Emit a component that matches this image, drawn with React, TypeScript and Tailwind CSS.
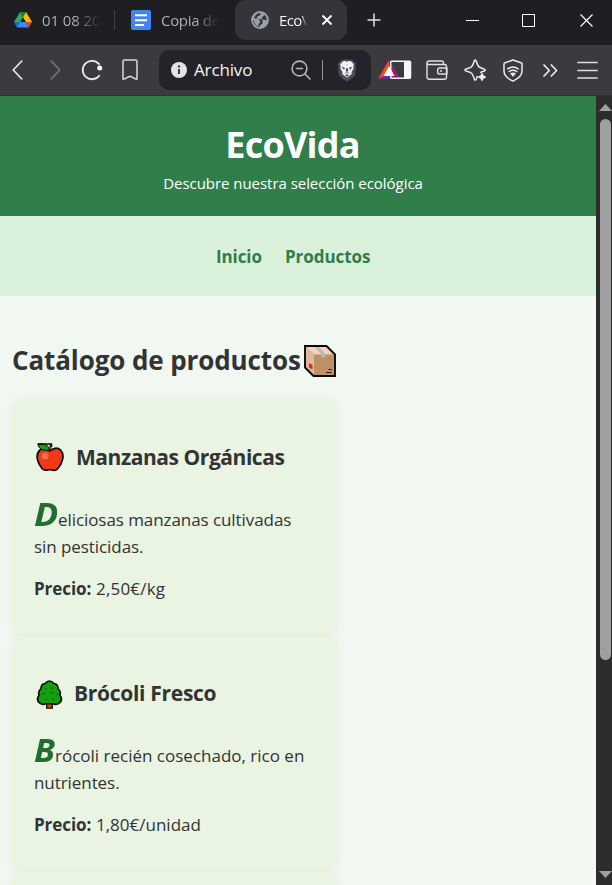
import type { ReactNode } from 'react';

function DriveIcon() {
  return (
    <svg className="h-[18px] w-[18px] shrink-0" viewBox="0 0 18 18">
      <path d="M6 1 9 6.300 3.200 16.500 0 11z" fill="#34a853" />
      <path d="M6 1h6L9 6.300z" fill="#188038" />
      <path d="M12 1 18 11h-6L9 6.300z" fill="#fbbc04" />
      <path d="M0 11h6l-3 5.500z" fill="#1967d2" />
      <path d="M6 11h6l2.800 5.500H3z" fill="#4285f4" />
      <path d="M12 11h6l-3.200 5.500z" fill="#ea4335" />
    </svg>
  );
}

function DocsIcon() {
  return (
    <svg className="h-5 w-5 shrink-0" viewBox="0 0 20 20">
      <rect width="20" height="20" rx="2" fill="#4285f4" />
      <path d="M4 5.300h12M4 10.200h12M4 15h9" stroke="#fff" strokeWidth="2" />
    </svg>
  );
}

function GlobeIcon() {
  return (
    <svg className="h-[18px] w-[18px] shrink-0" viewBox="0 0 18 18">
      <circle cx="9" cy="9" r="8.900" fill="#9aa0a6" />
      <path d="M9.500 2.100 9 4.500 6.500 5.200 6 8h4.500l1.200 2.500-.2 2L9.300 14l-.8 2C4.800 15.700 2.100 12.600 2.100 9l4 2.500.2-2L3 7.200C4 4 6.500 2.100 9.500 2.100z" fill="#35343a" />
      <path d="M12.300 3 15 5.500l.9 4-1.700-.7-1.800.3-1.700-1.500.5-1.800 2-.7z" fill="#35343a" />
      <path d="M3 7.500h3.500L9 9.500v2l-1.500 1.500v2.500C4.500 14.500 2.500 12 3 7.500z" fill="#9aa0a6" />
    </svg>
  );
}

function TabBar() {
  return (
    <div className="flex h-[45px] bg-[#1f1e23] text-[15px] leading-[40px] text-[#b5b5b9]">
      <div className="flex h-10 w-[114px] items-center pl-[14px]">
        <DriveIcon />
        <span className="ml-[10px] w-[59px] overflow-hidden whitespace-nowrap bg-linear-to-r from-[#b5b5b9] from-55% to-[#1f1e23] bg-clip-text tracking-[-0.1px] text-transparent">01 08 20</span>
      </div>
      <div className="mt-[10px] h-5 w-px bg-[#414045]" />
      <div className="flex h-10 w-[120px] items-center pl-[16px]">
        <DocsIcon />
        <span className="ml-[10px] w-[58px] overflow-hidden whitespace-nowrap bg-linear-to-r from-[#b5b5b9] from-60% to-[#1f1e23] bg-clip-text tracking-[-0.3px] text-transparent">Copia de</span>
      </div>
      <div className="flex h-10 w-[112px] items-center rounded-[11px] bg-[#35343a] pl-[16px]">
        <GlobeIcon />
        <span className="ml-[10px] w-[28px] overflow-hidden whitespace-nowrap bg-linear-to-r from-white from-80% to-[#35343a] bg-clip-text tracking-[-0.6px] text-transparent">EcoV</span>
        <svg className="ml-[14px] h-3 w-3" viewBox="0 0 12 12" stroke="#fff" strokeWidth="1.900"><path d="m1.500 1.500 9 9m0-9-9 9" /></svg>
      </div>
      <svg className="ml-[20px] mt-[13px] h-[14px] w-[14px]" viewBox="0 0 14 14" stroke="#e2e2e4" strokeWidth="1.500"><path d="M7 .5v13M.5 7h13" /></svg>
      <svg className="ml-[85px] mt-[14px] h-[13px] w-[13px]" viewBox="0 0 13 13" stroke="#fff"><path d="M0 6.500h13" /></svg>
      <svg className="ml-[43px] mt-[14px] h-[13px] w-[13px]" viewBox="0 0 13 13" fill="none" stroke="#fff"><path d="M.5.500h12v12H.5z" /></svg>
      <svg className="ml-[45px] mt-[14px] h-[13px] w-[13px]" viewBox="0 0 13 13" stroke="#fff" strokeWidth="1.200"><path d="m.5.500 12 12m0-12-12 12" /></svg>
    </div>
  );
}

function Toolbar() {
  return (
    <div className="flex h-[51px] items-center border-b border-[#333238] bg-[#3b3a3f] text-[#ececef]">
      <svg className="ml-3 h-5 w-[11px]" viewBox="0 0 11 20" fill="none" stroke="currentColor" strokeWidth="1.600" strokeLinecap="round" strokeLinejoin="round"><path d="M9.800 1 1.200 10l8.600 9" /></svg>
      <svg className="ml-[27px] h-5 w-[11px]" viewBox="0 0 11 20" fill="none" stroke="#77767c" strokeWidth="1.600" strokeLinecap="round" strokeLinejoin="round"><path d="m1.200 1 8.600 9-8.600 9" /></svg>
      <svg className="ml-[20px] h-[22px] w-[22px]" viewBox="0 0 22 22" fill="none" stroke="currentColor" strokeWidth="1.800" strokeLinecap="round">
        <path d="M18 5.100A9.200 9.200 0 1 0 18.200 16.700" />
        <circle cx="18.700" cy="8.900" r="2.500" fill="#fff" stroke="none" />
      </svg>
      <svg className="ml-[19px] h-[22px] w-4" viewBox="0 0 16 22" fill="none" stroke="#dadadd" strokeWidth="1.500" strokeLinejoin="round"><path d="M1 2.500Q1 1 2.500 1h11Q15 1 15 2.500v17.200q0 1-1 .5L8.700 17.500q-.7-.4-1.400 0L2 20.200q-1 .5-1-.5z" /></svg>
      <div className="ml-[21px] flex h-10 w-[212px] items-center rounded-[10px] bg-[#242329] pl-3">
        <svg className="h-4 w-4" viewBox="0 0 16 16"><circle cx="8" cy="8" r="8" fill="#e2e2e7" /><path d="M8 7v5" stroke="#3c3b42" strokeWidth="2" /><circle cx="8" cy="4.400" r="1.200" fill="#3c3b42" /></svg>
        <span className="ml-[7px] w-[97px] text-[17px] leading-10 tracking-[-0.15px] text-[#f4f4f6]">Archivo</span>
        <svg className="h-5 w-5" viewBox="0 0 20 20" fill="none" stroke="#b5b4b9" strokeWidth="1.600" strokeLinecap="round"><circle cx="8.500" cy="8.500" r="7.400" /><path d="m14 14 5 5M5.500 8.500h6" /></svg>
        <div className="ml-[11px] h-5 w-px bg-[#929297]" />
        <svg className="ml-[14px] h-[23px] w-[20px]" viewBox="0 0 20 23">
          <path d="M4.500 1Q10-.5 15.500 1L19 4.300l-.8 11.200Q17.500 18 10 22.700 2.500 18 1.800 15.500L1 4.300z" fill="#4c4b60" />
          <path d="M6 2.300 8 2l2 .8 2-.8 2 .3 2.800 3-.5 2.700.2 1.800-2 3.100.2 2-2.500 2-2.200 1.900-2.200-1.900-2.500-2 .2-2-2-3.100.2-1.800L3.200 5.300z" fill="#f4f4f8" />
          <path d="M4.500 7.500 8 8.700 7 11zM15.500 7.500 12 8.700l1 2.300zM9.300 9h1.400l.6 3-1.300 1-1.300-1zM7 14.300l3-1 3 1-1.300.3L10 14l-1.700.6zM8 16.300l2-1 2 1-2 1.400zM7.500 5.200h1.800L10 6l.7-.8h1.800" fill="#4c4b60" />
        </svg>
      </div>
      <svg className="ml-[7px] h-[22px] w-[34px]" viewBox="0 0 34 22">
        <path d="M0 20 11 1v8L6 17.500z" fill="#ff4724" />
        <path d="M11 1 22.500 20H18L11 9z" fill="#9e1f63" />
        <path d="M0 20h22.500L17 17H6z" fill="#662d91" />
        <path d="m11 7 5.500 10h-11z" fill="#fff" />
        <rect x="12.700" y="2.300" width="19.800" height="17" rx="1" fill="none" stroke="#f7f7f9" strokeWidth="1.500" />
        <path d="M26 2h7v17h-7z" fill="#f7f7f9" />
      </svg>
      <svg className="ml-[14px] h-5 w-[22px]" viewBox="0 0 22 20" fill="none" stroke="#e2e2e5" strokeWidth="1.400" strokeLinejoin="round"><path d="M2.500 4.500h16q2 0 2 2v10.700q0 2-2 2h-15q-2.500 0-2.500-2.200V3q0-2 2.200-2h12.300q2 0 2 2v1.500M1.200 3.500q.3 1 1.500 1H17M21 8h-7.500q-1.800 0-1.800 1.800v2.400q0 1.800 1.800 1.800H21z" /><path d="M14 11h2" /></svg>
      <svg className="ml-4 h-[23px] w-[23px]" viewBox="0 0 23 23" fill="none" stroke="#ededf0" strokeWidth="1.500" strokeLinejoin="round"><path d="M13.500 17q-.8 1.500-1.300 3.200-.9 2-1.900 0-1.700-5.300-3-6.200Q6.300 13 2 11.900q-2-1 0-1.900 4.500-1.200 5.600-2.300Q9 6.300 10.300 2q.9-2 1.900 0 1.400 4.500 2.500 5.600t5.500 2.500q2 .9 0 1.900-2.200.6-4 1.600" /><path d="m18 14.800 1 2.200 2.200 1-2.200 1-1 2.200-1-2.200-2.200-1 2.200-1z" fill="#fff" /></svg>
      <svg className="ml-[16px] h-[23px] w-5" viewBox="0 0 20 23" fill="none" stroke="#eeeef0" strokeWidth="1.500" strokeLinecap="round" strokeLinejoin="round"><path d="M10 1 18 3.700q1 .4 1 1.400v7q0 6-9 10-9-4-9-10v-7Q1 4 2 3.700z" /><path d="M4.800 9.800q5.200-3.700 10.400 0M6.200 12.500q3.800-2.600 7.600 0M8 14.800q2-1.200 4 0" /><circle cx="10" cy="16" r=".7" fill="#eee" /></svg>
      <svg className="ml-[20px] h-[13px] w-[15px]" viewBox="0 0 15 13" fill="none" stroke="#eee" strokeWidth="1.700" strokeLinecap="round" strokeLinejoin="round"><path d="M1 1 6.300 6.500 1 12M8.300 1l5.300 5.500L8.300 12" /></svg>
      <svg className="ml-[19px] h-[18px] w-[21px]" viewBox="0 0 21 18" stroke="#dedee1" strokeWidth="1.700" strokeLinecap="round"><path d="M1 1.500h19M1 9.500h19M1 17h19" /></svg>
    </div>
  );
}

function AppleIcon() {
  return (
    <svg className="h-[30px] w-[28px]" viewBox="0 0 28 30" stroke="#080d06" strokeLinejoin="round">
      <path d="M14 8Q20 3 24.500 7c5 5 1.500 14-3 19-2.500 2.700-5 1-7.500.5-3 .8-5.500 2-8-1-5-6-7-14-2-18.500Q8 4.200 14 8z" fill="#f03a17" strokeWidth="1.700" />
      <path d="M14.500 8Q13.800 4 15 1.500" fill="none" stroke="#6c220e" strokeWidth="2" />
      <path d="M1.800 1Q12-.3 13.700 7 3.500 9 1.800 1z" fill="#16a20c" strokeWidth="1" />
      <path d="M1.800 1h13.700v3" fill="none" strokeWidth="1.500" />
      <circle cx="9" cy="13" r="3.500" fill="#f36f51" stroke="none" />
    </svg>
  );
}

function TreeIcon() {
  return (
    <svg className="h-[29px] w-[27px]" viewBox="0 0 27 29" stroke="#080d06" strokeLinejoin="round">
      <path d="M9 3.500Q13.500-1.500 18 3.500q4 .5 4 5.200 3.500 3 1.800 6.300 3.500 4.800-.3 7.800-3 2.500-6.500 1H10q-3.500 1.500-6.500-1Q-.3 19.800 3.200 15 1.500 11.700 5 8.700 5 4 9 3.500z" fill="#16a00d" strokeWidth="1.700" />
      <path d="M10.700 23.800h5.600v4.400h-5.600z" fill="#d34b12" strokeWidth="1.300" />
      <path d="m9 9 2-1m4-1 2 2M5.500 15l2-2 2 1.500m5-1.500 2-1 1.500 2m2-1 2 2M9 20l2-1m5 0 2 1" fill="none" stroke="#0c7009" strokeWidth="1.200" />
    </svg>
  );
}

function BoxIcon() {
  return (
    <svg className="h-[32px] w-[32px]" viewBox="0 0 32 32">
      <path d="M1.500 1.500h20.800l8.200 8v21H9.500l-8-8z" fill="#bd9166" />
      <path d="M1.500 1.500h20.800l8.200 8H10z" fill="#f3d1bc" />
      <path d="m1.500 1.500 8.500 8v21l-8.500-8z" fill="#dfb89e" />
      <path d="M11 2h4l6.500 7.500v2.800h-4V9.500z" fill="#b8b9b7" />
      <path d="m5 18 3.500 2v4.500L5 22.500z" fill="#f11e30" />
      <path d="M24.500 24.500h3M22 27.500h5.500" stroke="#26190e" strokeWidth="1" />
      <path d="M1 1h21.500L31 9.500V31H9.500L1 22.500z" fill="none" stroke="#090909" strokeWidth="1.900" />
    </svg>
  );
}

interface ProductProps {
  icon: ReactNode;
  name: string;
  nameClass: string;
  initial: string;
  initialClass: string;
  first: string;
  firstClass: string;
  second: string;
  price: string;
  priceClass: string;
}

function Product({ icon, name, nameClass, initial, initialClass, first, firstClass, second, price, priceClass }: ProductProps) {
  return (
    <article className="mb-px h-[235px] w-[325px] shrink-0 rounded-[10px] bg-[#e9f4e2] pl-[22px] pt-[40px] shadow-[0_0_8px_rgba(0,0,0,0.05)]">
      <h3 className="flex h-[34px] items-center whitespace-nowrap text-[21px] font-bold leading-[34px]">
        <span className="ml-[2px] mt-[2px]">{icon}</span>
        <span className={nameClass}>{name}</span>
      </h3>
      <p className="mt-[17px] h-[69px] whitespace-nowrap text-[17px] leading-[27px]">
        <span className="flex h-[42px] items-baseline pt-[9px]">
          <span className={initialClass}>{initial}</span>
          <span className={firstClass}>{first}</span>
        </span>
        <span className="block tracking-[-0.07px]">{second}</span>
      </p>
      <p className="mt-[15px] whitespace-nowrap text-[17px] leading-[27px]">
        <strong className="inline-block w-[62px] tracking-[-0.05px]">Precio:</strong>
        <span className={priceClass}>{price}</span>
      </p>
    </article>
  );
}

export default function App() {
  return (
    <div className="flex h-[885px] w-[612px] flex-col overflow-hidden font-['Open_Sans','Noto_Sans',sans-serif] text-[#333]">
      <TabBar />
      <Toolbar />
      <div className="flex min-h-0 flex-1">
        <main className="w-[596px] overflow-hidden bg-[#f1f8f2]">
          <header className="flex h-[120px] flex-col items-center bg-[#307e4a] pt-[25px] text-white">
            <h1 className="-ml-[11px] whitespace-nowrap text-[36px] font-bold leading-[48px] tracking-[-0.8px]">EcoVida</h1>
            <p className="-ml-[10px] whitespace-nowrap text-[15px] leading-[29px] tracking-[-0.04px]">Descubre nuestra selección ecológica</p>
          </header>
          <nav className="flex h-20 gap-[23px] bg-[#d9f1da] pl-[216px] text-[17px] font-bold leading-[82px] text-[#2f7d48]">
            <span className="w-[46px] tracking-[-0.1px]">Inicio</span>
            <span className="tracking-[-0.05px]">Productos</span>
          </nav>
          <section className="pl-3">
            <h2 className="flex h-[104px] whitespace-nowrap pt-[44px] text-[26px] font-bold leading-[40px]">
              <span className="w-[292px] tracking-[-0.1px]">Catálogo de productos</span>
              <span className="pt-[5px]"><BoxIcon /></span>
            </h2>
            <Product icon={<AppleIcon />} name="Manzanas Orgánicas" nameClass="ml-[12px] tracking-[-0.45px]" initial="D" initialClass="w-[24px] origin-left scale-x-112 text-[32px] font-bold italic leading-[27px] text-[#226d30] font-['Noto_Sans']" first="eliciosas manzanas cultivadas" firstClass="tracking-[-0.07px]" second="sin pesticidas." price="2,50€/kg" priceClass="tracking-[0.2px]" />
            <Product icon={<TreeIcon />} name="Brócoli Fresco" nameClass="ml-[11px] tracking-[-0.3px]" initial="B" initialClass="w-[21px] origin-left scale-x-106 text-[32px] font-bold italic leading-[27px] text-[#226d30] font-['Noto_Sans']" first="rócoli recién cosechado, rico en" firstClass="tracking-[0px]" second="nutrientes." price="1,80€/unidad" priceClass="tracking-[0px]" />
            <div className="h-10 w-[325px] rounded-t-[10px] bg-[#e9f4e2] shadow-[0_0_8px_rgba(0,0,0,0.05)]" />
          </section>
        </main>
        <aside className="flex w-4 flex-col items-center bg-[#2c2c2c] pl-[3px] pt-2">
          <svg className="h-[7px] w-[13px]" viewBox="0 0 13 7"><path d="M6.500 0 13 7H0z" fill="#9f9f9f" /></svg>
          <div className="mt-2 h-[541px] w-[11px] shrink-0 rounded-full bg-[#9f9f9f]" />
          <svg className="mb-[7px] mt-auto h-[7px] w-[13px]" viewBox="0 0 13 7"><path d="M0 0h13L6.500 7z" fill="#9f9f9f" /></svg>
        </aside>
      </div>
    </div>
  );
}
